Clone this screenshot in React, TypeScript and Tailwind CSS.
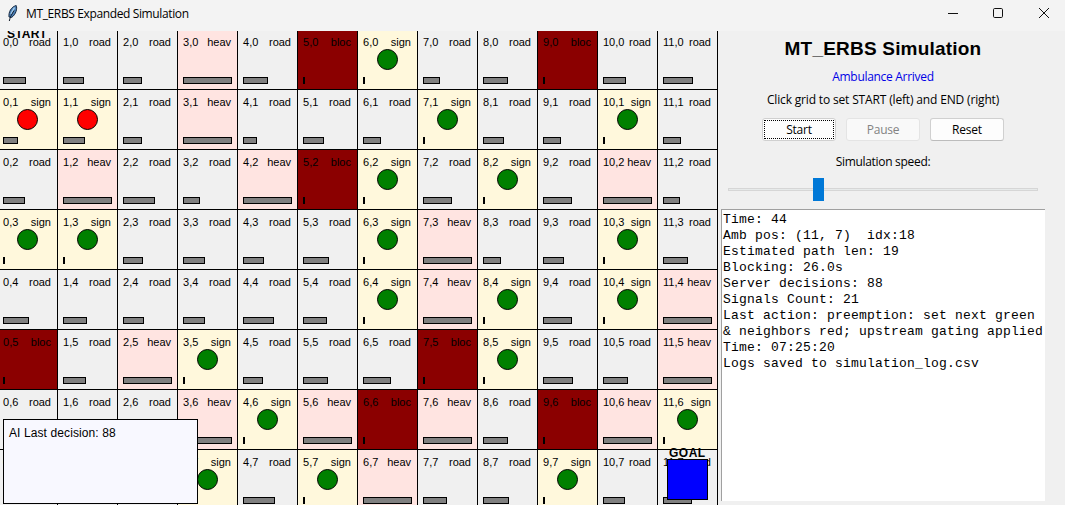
import React from "react";

type Kind = "road" | "heav" | "sign" | "bloc";

const KINDS: Record<string, Kind> = { r: "road", h: "heav", s: "sign", b: "bloc" };

const FILL: Record<Kind, string> = {
  road: "bg-[#f0f0f0]",
  heav: "bg-[#ffe4e1]",
  sign: "bg-[#fff8dc]",
  bloc: "bg-[#8b0000]",
};

const MAP = [
  "rrrhrbsrrbrr",
  "ssrhrrrsrrsr",
  "rhrrhbsrsrhr",
  "ssrrrrshrrsr",
  "rrrrrrshsrsh",
  "brhsrrrbsrrh",
  "rrrhshbhrbhs",
  "rrrsrshrrsrr",
];

const QUEUE = [
  [23, 21, 19, 49, 25, 2, 2, 17, 25, 2, 23, 30],
  [15, 22, 19, 49, 14, 21, 18, 2, 21, 18, 2, 18],
  [22, 49, 32, 17, 49, 2, 2, 29, 2, 29, 49, 17],
  [2, 2, 20, 22, 21, 26, 2, 49, 18, 21, 2, 25],
  [26, 24, 21, 22, 31, 24, 2, 49, 2, 29, 2, 49],
  [2, 23, 49, 2, 20, 25, 28, 2, 2, 30, 25, 49],
  [20, 20, 20, 49, 2, 49, 2, 49, 25, 2, 49, 2],
  [20, 20, 20, 2, 32, 2, 49, 24, 26, 2, 22, 29],
];

const LOG = [
  "Time: 44",
  "Amb pos: (11, 7)  idx:18",
  "Estimated path len: 19",
  "Blocking: 26.0s",
  "Server decisions: 88",
  "Signals Count: 21",
  "Last action: preemption: set next green",
  "& neighbors red; upstream gating applied",
  "Time: 07:25:20",
  "Logs saved to simulation_log.csv",
];

function Cell({ x, y }: { x: number; y: number }) {
  const kind = KINDS[MAP[y][x]];
  const red = y === 1 && x < 2;
  return (
    <div className={`relative flex h-[60px] w-[60px] flex-col justify-between border-r border-b border-black pt-[6px] pr-[6px] pb-[5px] pl-[5px] ${FILL[kind]}`}>
      <div className="flex justify-between text-[11px] leading-[13px] whitespace-nowrap">
        <span>{x},{y}</span>
        <span>{kind}</span>
      </div>
      {kind === "sign" && (
        <div className={`absolute top-[19px] left-[19px] h-[21px] w-[21px] rounded-full border border-black ${red ? "bg-[#ff0000]" : "bg-[#008000]"}`} />
      )}
      <div className="h-[7px] shrink-0 border border-black bg-[#808080]" style={{ width: QUEUE[y][x] }} />
    </div>
  );
}

function TitleBar() {
  return (
    <header className="flex h-[31px] shrink-0 items-start bg-[#f3f3f3]">
      <svg className="mt-[5px] ml-[7px]" width="12" height="17" viewBox="0 0 12 17">
        <path d="M2 12C1.5 7 4 2 9.2.5 10.5 3.5 9 9.500 4.500 12.500Z" fill="#4c81b8" stroke="#172a42" strokeWidth="1" />
        <path d="M7.500 2.500 4 9" stroke="#a9d2f2" strokeWidth="1.500" fill="none" />
        <path d="M7 5.500C5 9 3 12 2.300 16" stroke="#111b2a" strokeWidth="1" fill="none" />
      </svg>
      <span className="mt-[6px] ml-[7px] font-['Open_Sans','Noto_Sans',sans-serif] text-[12px] leading-[16px] tracking-[-0.37px]">MT_ERBS Expanded Simulation</span>
      <svg className="mt-[7px] ml-auto mr-[15px]" width="103" height="12" viewBox="0 0 103 12" fill="none" stroke="#111" strokeWidth="1">
        <path d="M1 6.500H11" />
        <rect x="46.500" y="1.500" width="9" height="9" rx="1.200" />
        <path d="M92 1 102 11M102 1 92 11" />
      </svg>
    </header>
  );
}

export default function App() {
  return (
    <div className="flex h-[505px] w-[1065px] flex-col overflow-hidden bg-[#f0f0f0] font-['Liberation_Sans',Arial,sans-serif] text-black">
      <TitleBar />
      <div className="flex min-h-0 flex-1">
        <main className="relative h-[474px] w-[718px] shrink-0 overflow-hidden">
          <div className="-mt-px -ml-[2px] grid w-[720px] grid-cols-12">
            {MAP.map((row, y) => row.split("").map((_, x) => <Cell key={`${x}-${y}`} x={x} y={y} />))}
          </div>
          <div className="absolute -top-[4px] left-[7px] text-[12px] leading-[14px] font-bold tracking-[0.2px]">START</div>
          <div className="absolute top-[415px] left-[669px] text-[12px] leading-[14px] font-bold tracking-[0.5px]">GOAL</div>
          <div className="absolute top-[428px] left-[667px] h-[41px] w-[41px] border border-black bg-[#0000ff]" />
          <div className="absolute top-[388px] left-[3px] h-[85px] w-[195px] border border-black bg-[#f8f8ff] px-[5px] pt-[6px] text-[12px] leading-[14px] tracking-[0.1px]">AI Last decision: 88</div>
        </main>
        <aside className="ml-[3px] flex w-[324px] flex-col items-center font-['Open_Sans','Noto_Sans',sans-serif] text-[12px] leading-[16px]">
          <h1 className="mt-[7px] font-['Liberation_Sans',Arial,sans-serif] text-[19px] leading-[22px] font-bold tracking-[0.2px] whitespace-nowrap">MT_ERBS Simulation</h1>
          <p className="mt-[9px] tracking-[-0.3px] text-[#0000e6]">Ambulance Arrived</p>
          <p className="mt-[7px] tracking-[-0.16px] whitespace-nowrap">Click grid to set START (left) and END (right)</p>
          <div className="mt-[10px] flex gap-[10px]">
            <button className="h-[23px] w-[74px] rounded-[3px] border border-[#d0d0d0] bg-[#fdfdfd] p-px tracking-[-0.2px]">
              <span className="flex h-full items-center justify-center border border-dotted border-black">Start</span>
            </button>
            <button className="h-[23px] w-[74px] rounded-[3px] border border-[#e4e4e4] bg-[#f9f9f9] tracking-[-0.2px] text-[#838383]">Pause</button>
            <button className="h-[23px] w-[74px] rounded-[3px] border border-[#d0d0d0] border-b-[#bcbcbc] bg-[#fdfdfd] tracking-[-0.2px]">Reset</button>
          </div>
          <p className="mt-[13px] tracking-[-0.3px]">Simulation speed:</p>
          <div className="mt-[8px] flex h-[23px] w-[310px] items-center">
            <div className="h-[3px] w-[85px] border border-r-0 border-[#d6d6d6] bg-[#e7eaea]" />
            <div className="h-[23px] w-[11px] bg-[#0078d7]" />
            <div className="h-[3px] flex-1 border border-l-0 border-[#d6d6d6] bg-[#e7eaea]" />
          </div>
          <pre className="mt-[8px] h-[292px] w-full border-t border-l border-[#a0a0a0] bg-white pt-[2px] pl-px font-['Liberation_Mono',monospace] text-[13px] leading-[16px] tracking-[0.2px]">{LOG.join("\n")}</pre>
        </aside>
      </div>
    </div>
  );
}
